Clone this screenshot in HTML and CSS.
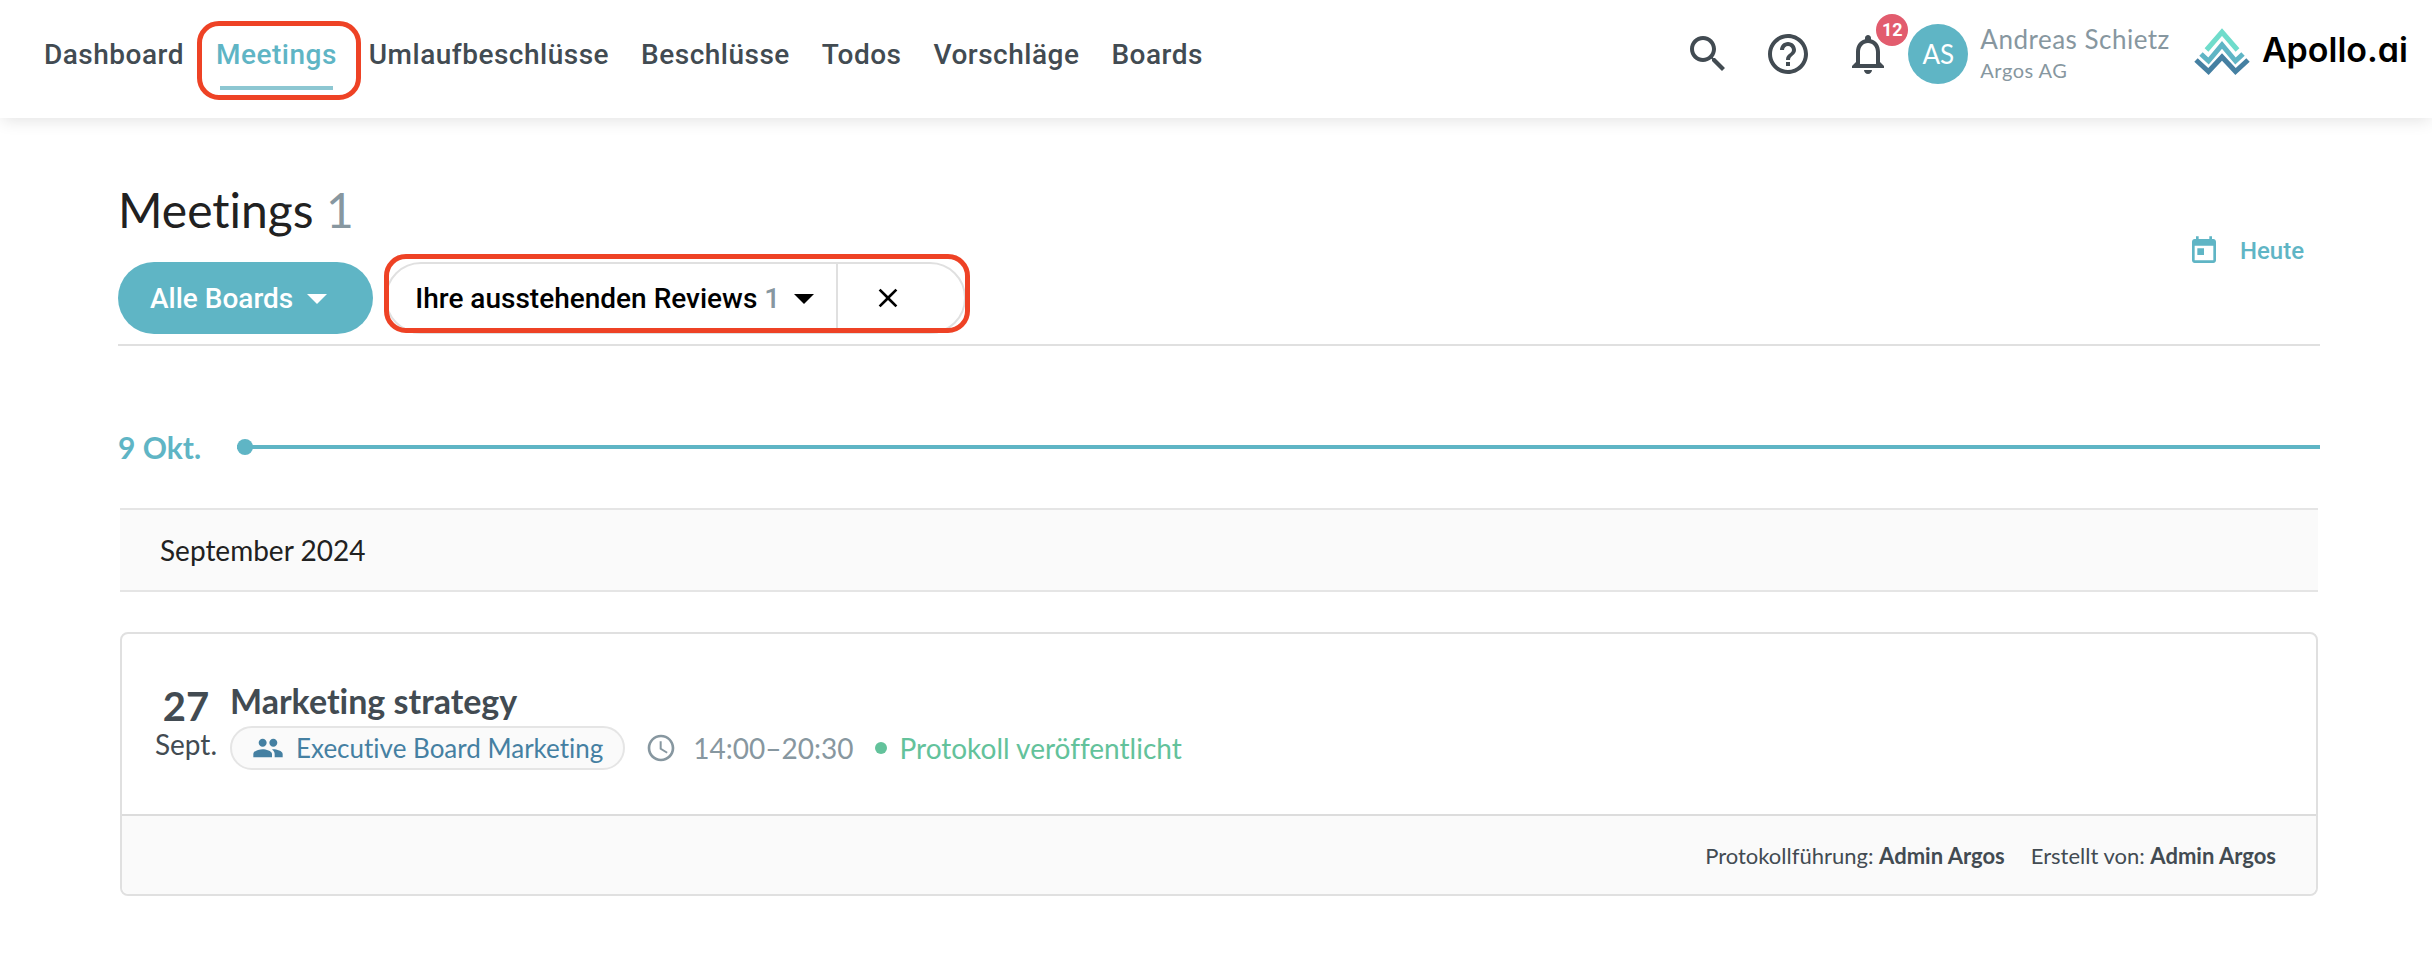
FILE: index.html
```html
<!DOCTYPE html>
<html lang="de">
   <head>
      <meta charset="UTF-8">
      <meta name="viewport" content="width=device-width, initial-scale=1.0">
      <title>Meetings</title>
      <link rel="stylesheet" href="styles.css">
   </head>
   <body>
      <header class="topbar">
         <nav class="nav">
            <a href="#">Dashboard</a>
            <a href="#" class="active">Meetings</a>
            <a href="#">Umlaufbeschlüsse</a>
            <a href="#">Beschlüsse</a>
            <a href="#">Todos</a>
            <a href="#">Vorschläge</a>
            <a href="#">Boards</a>
         </nav>
         <div class="tools">
            <button class="icon-button" aria-label="Suche">
               <svg viewBox="0 0 24 24"><path d="M15.5 14h-.79l-.28-.27C15.41 12.59 16 11.11 16 9.5 16 5.91 13.09 3 9.5 3S3 5.91 3 9.5 5.91 16 9.5 16c1.61 0 3.09-.59 4.23-1.57l.27.28v.79l5 4.99L20.49 19l-4.99-5zm-6 0C7.01 14 5 11.99 5 9.5S7.01 5 9.5 5 14 7.01 14 9.5 11.99 14 9.5 14z"/></svg>
            </button>
            <button class="icon-button" aria-label="Hilfe">
               <svg viewBox="0 0 24 24"><path d="M11 18h2v-2h-2v2zm1-16C6.48 2 2 6.48 2 12s4.48 10 10 10 10-4.48 10-10S17.52 2 12 2zm0 18c-4.41 0-8-3.59-8-8s3.59-8 8-8 8 3.59 8 8-3.59 8-8 8zm0-14c-2.21 0-4 1.79-4 4h2c0-1.1.9-2 2-2s2 .9 2 2c0 2-3 1.75-3 5h2c0-2.25 3-2.5 3-5 0-2.21-1.79-4-4-4z"/></svg>
            </button>
            <button class="icon-button" aria-label="Benachrichtigungen">
               <svg viewBox="0 0 24 24"><path d="M12 22c1.1 0 2-.9 2-2h-4c0 1.1.9 2 2 2zm6-6v-5c0-3.07-1.63-5.64-4.5-6.32V4c0-.83-.67-1.5-1.5-1.5s-1.5.67-1.5 1.5v.68C7.64 5.36 6 7.92 6 11v5l-2 2v1h16v-1l-2-2zm-2 1H8v-6c0-2.48 1.51-4.5 4-4.5s4 2.02 4 4.5v6z"/></svg>
               <span class="badge">12</span>
            </button>
         </div>
         <div class="user">
            <div class="avatar">AS</div>
            <div class="user-info">
               <div class="user-name">Andreas Schietz</div>
               <div class="user-company">Argos AG</div>
            </div>
         </div>
         <a href="#" class="logo">
            <svg viewBox="0 0 56 48" stroke-width="5">
               <path stroke="#6fdccb" d="M12.500 22 28 4 43.500 22"/>
               <path stroke="#5fb5c5" d="M7 26 14.500 33 28 17 41.500 33 49 26"/>
               <path stroke="#4580a2" d="M2 32 14.500 43.500 28 29 41.500 43.500 54 32"/>
            </svg>
            <span>Apollo.ai</span>
         </a>
      </header>
      <main class="page">
         <div class="page-head">
            <div>
               <h1>Meetings <span class="count">1</span></h1>
               <div class="filters">
                  <button class="pill pill-primary">Alle Boards
                     <svg class="caret" viewBox="0 0 24 24"><path d="M7 10l5 5 5-5z"/></svg>
                  </button>
                  <div class="pill-group">
                     <button class="pill">Ihre ausstehenden Reviews&nbsp;<span class="count">1</span>
                        <svg class="caret" viewBox="0 0 24 24"><path d="M7 10l5 5 5-5z"/></svg>
                     </button>
                     <button class="pill-clear" aria-label="Filter entfernen">
                        <svg viewBox="0 0 24 24"><path d="M19 6.410L17.590 5 12 10.590 6.410 5 5 6.410 10.590 12 5 17.590 6.410 19 12 13.410 17.590 19 19 17.590 13.410 12z"/></svg>
                     </button>
                  </div>
               </div>
            </div>
            <button class="today">
               <svg viewBox="0 0 24 24"><path d="M19 3h-1V1h-2v2H8V1H6v2H5c-1.110 0-1.990.9-1.990 2L3 19c0 1.100.890 2 2 2h14c1.100 0 2-.9 2-2V5c0-1.100-.9-2-2-2zm0 16H5V8h14v11zM7 10h5v5H7z"/></svg>
               Heute
            </button>
         </div>
         <div class="timeline">
            <span>9 Okt.</span>
            <div class="timeline-line"></div>
         </div>
         <h2 class="month">September 2024</h2>
         <article class="meeting">
            <div class="meeting-body">
               <div class="date">
                  <div class="day">27</div>
                  <div>Sept.</div>
               </div>
               <div>
                  <h3>Marketing strategy</h3>
                  <div class="meta">
                     <span class="chip">
                        <svg viewBox="0 0 24 24"><path d="M16 11c1.660 0 2.990-1.340 2.990-3S17.660 5 16 5c-1.660 0-3 1.340-3 3s1.340 3 3 3zm-8 0c1.660 0 2.990-1.340 2.990-3S9.660 5 8 5C6.340 5 5 6.340 5 8s1.340 3 3 3zm0 2c-2.330 0-7 1.170-7 3.500V19h14v-2.500c0-2.330-4.670-3.500-7-3.500zm8 0c-.290 0-.620.020-.970.050 1.160.840 1.970 1.970 1.970 3.450V19h6v-2.500c0-2.330-4.670-3.500-7-3.500z"/></svg>
                        Executive Board Marketing
                     </span>
                     <span class="time">
                        <svg viewBox="0 0 24 24"><path d="M11.990 2C6.470 2 2 6.480 2 12s4.470 10 9.990 10C17.520 22 22 17.520 22 12S17.520 2 11.990 2zM12 20c-4.420 0-8-3.580-8-8s3.580-8 8-8 8 3.580 8 8-3.580 8-8 8zm.5-13H11v6l5.250 3.150.750-1.230-4.500-2.670z"/></svg>
                        14:00–20:30
                     </span>
                     <span class="status">Protokoll veröffentlicht</span>
                  </div>
               </div>
            </div>
            <footer class="meeting-footer">
               <span>Protokollführung: <b>Admin Argos</b></span>
               <span>Erstellt von: <b>Admin Argos</b></span>
            </footer>
         </article>
      </main>
   </body>
</html>
```
FILE: styles.css
```css
*, *::before, *::after {
box-sizing: border-box;
}
body {
font-family: Lato, sans-serif;
font-size: 28px;
font-variant-ligatures: none;
color: #424b52;
background-color: white;
margin: 0;
}
h1, h2, h3 {
font-weight: 400;
margin: 0;
}
a {
color: inherit;
text-decoration: none;
}
button {
font-family: Roboto, sans-serif;
font-size: 28px;
font-weight: 500;
background: none;
border: none;
padding: 0;
cursor: pointer;
}
svg {
display: block;
flex: none;
fill: currentColor;
}
/* Top bar */
.topbar {
display: flex;
align-items: flex-start;
height: 118px;
padding: 0 24px 0 28px;
box-shadow: 0 4px 16px -2px rgba(0, 0, 0, 0.12);
}
.nav {
display: flex;
font-family: Roboto, sans-serif;
font-weight: 500;
letter-spacing: 0.5px;
}
.nav a {
position: relative;
padding: 0 16px;
line-height: 110px;
}
.nav .active {
color: #5fb5c5;
}
.nav .active::before {
content: "";
position: absolute;
top: 86px;
left: 20px;
right: 20px;
height: 4px;
background-color: #8dc7d2;
}
/* red marker around the active entry */
.nav .active::after {
content: "";
position: absolute;
top: 21px;
left: -3px;
right: -8px;
height: 79px;
border: 5px solid #ee4225;
border-radius: 22px;
z-index: 1;
}
.tools {
display: flex;
gap: 32px;
margin: 30px 16px 0 auto;
}
.icon-button {
position: relative;
color: #424b52;
}
.icon-button svg {
width: 48px;
height: 48px;
}
.badge {
position: absolute;
top: -16px;
right: -16px;
width: 32px;
border-radius: 50%;
background-color: #e25c6e;
color: white;
font-size: 18px;
font-weight: 700;
line-height: 32px;
}
.user {
display: flex;
gap: 12px;
margin-top: 24px;
color: #8797a0;
}
.avatar {
width: 60px;
height: 60px;
border-radius: 50%;
background-color: #5fb5c5;
color: white;
font-size: 26px;
line-height: 60px;
text-align: center;
}
.user-name {
font-size: 26px;
line-height: 30px;
letter-spacing: 0.5px;
}
.user-company {
font-size: 20px;
line-height: 32px;
letter-spacing: 0.5px;
}
.logo {
display: flex;
align-items: flex-start;
gap: 12px;
margin: 28px 0 0 24px;
color: black;
font-family: Inter, sans-serif;
font-size: 34px;
font-weight: 600;
font-feature-settings: "cv11";
line-height: 44px;
}
.logo svg {
width: 56px;
height: 48px;
fill: none;
}
/* Page content */
.page {
padding: 60px 112px 0 118px;
}
.page-head {
display: flex;
align-items: center;
justify-content: space-between;
padding-bottom: 10px;
border-bottom: 2px solid #e0e0e0;
}
h1 {
color: #212121;
font-size: 48px;
line-height: 64px;
margin-bottom: 20px;
}
.count {
color: #8797a0;
}
.filters {
display: flex;
gap: 12px;
}
.pill {
display: flex;
align-items: center;
height: 72px;
padding: 0 32px;
}
.pill-primary {
border-radius: 36px;
background-color: #5fb5c5;
color: white;
}
.caret {
width: 48px;
height: 48px;
}
.pill-group {
position: relative;
display: flex;
height: 72px;
border: 2px solid #e0e0e0;
border-radius: 36px;
}
.pill-group .pill {
height: 68px;
padding: 0 8px 0 28px;
}
.pill-group::after {
content: "";
position: absolute;
top: -10px;
left: -3px;
right: -6px;
height: 79px;
border: 5px solid #ee4225;
border-radius: 22px;
pointer-events: none;
}
.pill-clear {
border-left: 2px solid #e0e0e0;
padding: 0 60px 0 34px;
}
.pill-clear svg, .today svg, .chip svg, .time svg {
width: 32px;
height: 32px;
}
.today {
display: flex;
align-items: center;
gap: 20px;
margin: 0 16px 10px 0;
color: #5fb5c5;
font-size: 24px;
}
.timeline {
display: flex;
align-items: center;
gap: 36px;
margin: 80px 0 40px;
color: #5fb5c5;
font-size: 30px;
font-weight: 700;
line-height: 42px;
}
.timeline-line {
position: relative;
flex: 1;
height: 4px;
background-color: #5fb5c5;
}
.timeline-line::before {
content: "";
position: absolute;
top: -6px;
left: 0;
width: 16px;
height: 16px;
border-radius: 50%;
background-color: #5fb5c5;
}
.month {
margin: 0 2px 40px;
padding: 0 40px;
border: solid #e5e5e5;
border-width: 2px 0;
background-color: #fafafa;
color: #212121;
font-size: 28px;
line-height: 80px;
}
.meeting {
margin: 0 2px;
border: 2px solid #e0e0e0;
border-radius: 8px;
}
.meeting-body {
display: flex;
gap: 12px;
padding: 46px 32px 44px;
}
.date {
width: 64px;
padding-top: 4px;
text-align: center;
line-height: 32px;
}
.day {
font-size: 40px;
font-weight: 700;
line-height: 44px;
}
h3 {
font-size: 34px;
font-weight: 700;
line-height: 42px;
margin-bottom: 4px;
}
.meta {
display: flex;
align-items: center;
}
.chip {
display: flex;
align-items: center;
gap: 12px;
height: 44px;
padding: 0 20px;
border: 2px solid #e5e5e5;
border-radius: 22px;
background-color: #fafafa;
color: #4580a2;
font-size: 26px;
}
.time {
display: flex;
align-items: center;
gap: 16px;
margin: 0 22px 0 20px;
color: #8797a0;
}
.status {
display: flex;
align-items: center;
gap: 12px;
color: #63c29b;
}
.status::before {
content: "";
width: 12px;
height: 12px;
border-radius: 50%;
background-color: #63c29b;
}
.meeting-footer {
display: flex;
justify-content: flex-end;
gap: 26px;
padding: 2px 40px 0;
border-top: 2px solid #dcdcdc;
border-radius: 0 0 8px 8px;
background-color: #fafafa;
font-size: 22px;
line-height: 76px;
}
```
